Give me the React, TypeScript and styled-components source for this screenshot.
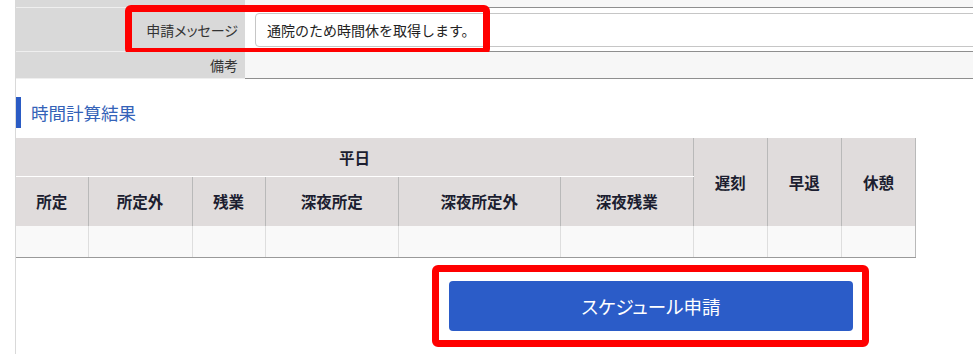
import React from "react";
import styled, { createGlobalStyle } from "styled-components";

const GlobalStyle = createGlobalStyle`
  html, body {
    margin: 0;
    padding: 0;
    background: #fff;
    overflow: hidden;
  }
  body {
    font-family: "Noto Sans CJK JP", "Noto Sans", sans-serif;
    color: #333;
  }
`;

const Panel = styled.div`
  display: flow-root;
  margin-left: 15px;
  width: 1270px;
  min-height: 360px;
  border-left: 1px solid #d9d9d9;
  background: #fff;
`;

const Form = styled.div`
  margin-top: -30px;
  display: flex;
  flex-direction: column;
`;

const Row = styled.div<{ height: number }>`
  position: relative;
  display: flex;
  height: ${(p) => p.height}px;
`;

const Label = styled.div`
  width: 229px;
  flex: none;
  box-sizing: border-box;
  background: #d9d9d9;
  border-bottom: 1px solid #efefef;
  padding-right: 7px;
  display: flex;
  align-items: center;
  justify-content: flex-end;
  font-size: 14px;
  font-feature-settings: "palt";
  color: #333;
`;

const Value = styled.div<{ tone?: "white" | "grey" }>`
  flex: 1;
  box-sizing: border-box;
  background: ${(p) => (p.tone === "white" ? "#fff" : "#f7f7f7")};
  border-bottom: 1px solid #8f8f8f;
  padding: 0 10px;
  display: flex;
  align-items: center;
`;

const TextInput = styled.input`
  width: 100%;
  height: 34px;
  box-sizing: border-box;
  border: 1px solid #c6c6c6;
  border-radius: 4px;
  padding: 0 11px;
  font-family: "Noto Sans CJK JP", "Noto Sans", sans-serif;
  font-size: 14px;
  color: #222;
  background: #fff;
  outline: none;
`;

const Highlight = styled.div`
  position: absolute;
  box-sizing: border-box;
  border: 7px solid #ff0000;
  border-radius: 6px;
  pointer-events: none;
`;

const FieldHighlight = styled(Highlight)`
  left: 109px;
  top: -3px;
  width: 365px;
  height: 50px;
`;

const ButtonHighlight = styled(Highlight)`
  inset: -16px -16px -16px -17px;
`;

const SectionTitle = styled.h2`
  margin: 18px 0 0;
  border-left: 5px solid #2a5bc4;
  padding-left: 10px;
  height: 31px;
  line-height: 31px;
  font-size: 17.5px;
  font-weight: 400;
  color: #3462b8;
`;

const ResultTable = styled.table`
  margin-top: 10px;
  border-collapse: collapse;
  table-layout: fixed;
  width: 900px;
  font-family: "Noto Sans CJK JP", "Noto Sans", sans-serif;
`;

const HeadCell = styled.th<{ group?: boolean }>`
  background: #e0dcdc;
  color: #1c1e30;
  font-size: 15.5px;
  font-weight: 700;
  padding: 0;
  border-right: 1px solid #b9b9b9;
  border-bottom: ${(p) => (p.group ? "1px solid #fff" : "none")};
`;

const DataCell = styled.td<{ last?: boolean }>`
  background: #f9f9f9;
  height: 31px;
  padding: 0;
  border-right: ${(p) => (p.last ? "1px solid #b9b9b9" : "1px solid #dedede")};
  border-bottom: 1px solid #9a9a9a;
`;

const GroupRow = styled.tr`
  height: 38px;
`;

const ColumnRow = styled.tr`
  height: 50px;
`;

const ButtonArea = styled.div`
  margin-top: 23px;
  display: flex;
  justify-content: center;
`;

const ButtonWrap = styled.div`
  position: relative;
`;

const SubmitButton = styled.button`
  width: 404px;
  height: 50px;
  border: none;
  border-radius: 4px;
  background: #2b5cc8;
  color: #fff;
  font-family: "Noto Sans CJK JP", "Noto Sans", sans-serif;
  font-size: 18.5px;
  font-feature-settings: "palt";
  cursor: pointer;
`;

const widths = [72, 104, 73, 133, 162, 133, 74, 74, 74];
const weekday = ["所定", "所定外", "残業", "深夜所定", "深夜所定外", "深夜残業"];
const others = ["遅刻", "早退", "休憩"];

const App: React.FC = () => {
  return (
    <>
      <GlobalStyle />
      <Panel>
        <Form>
          <Row height={38}>
            <Label />
            <Value />
          </Row>
          <Row height={44}>
            <Label>申請メッセージ</Label>
            <Value tone="white">
              <TextInput readOnly defaultValue="通院のため時間休を取得します。" />
            </Value>
            <FieldHighlight />
          </Row>
          <Row height={27}>
            <Label>備考</Label>
            <Value />
          </Row>
        </Form>

        <SectionTitle>時間計算結果</SectionTitle>

        <ResultTable>
          <colgroup>
            {widths.map((w, i) => (
              <col key={i} style={{ width: w }} />
            ))}
          </colgroup>
          <thead>
            <GroupRow>
              <HeadCell colSpan={6} group>
                平日
              </HeadCell>
              {others.map((label) => (
                <HeadCell key={label} rowSpan={2}>
                  {label}
                </HeadCell>
              ))}
            </GroupRow>
            <ColumnRow>
              {weekday.map((label) => (
                <HeadCell key={label}>{label}</HeadCell>
              ))}
            </ColumnRow>
          </thead>
          <tbody>
            <tr>
              {widths.map((_, i) => (
                <DataCell key={i} last={i === widths.length - 1} />
              ))}
            </tr>
          </tbody>
        </ResultTable>

        <ButtonArea>
          <ButtonWrap>
            <SubmitButton>スケジュール申請</SubmitButton>
            <ButtonHighlight />
          </ButtonWrap>
        </ButtonArea>
      </Panel>
    </>
  );
};

export default App;
